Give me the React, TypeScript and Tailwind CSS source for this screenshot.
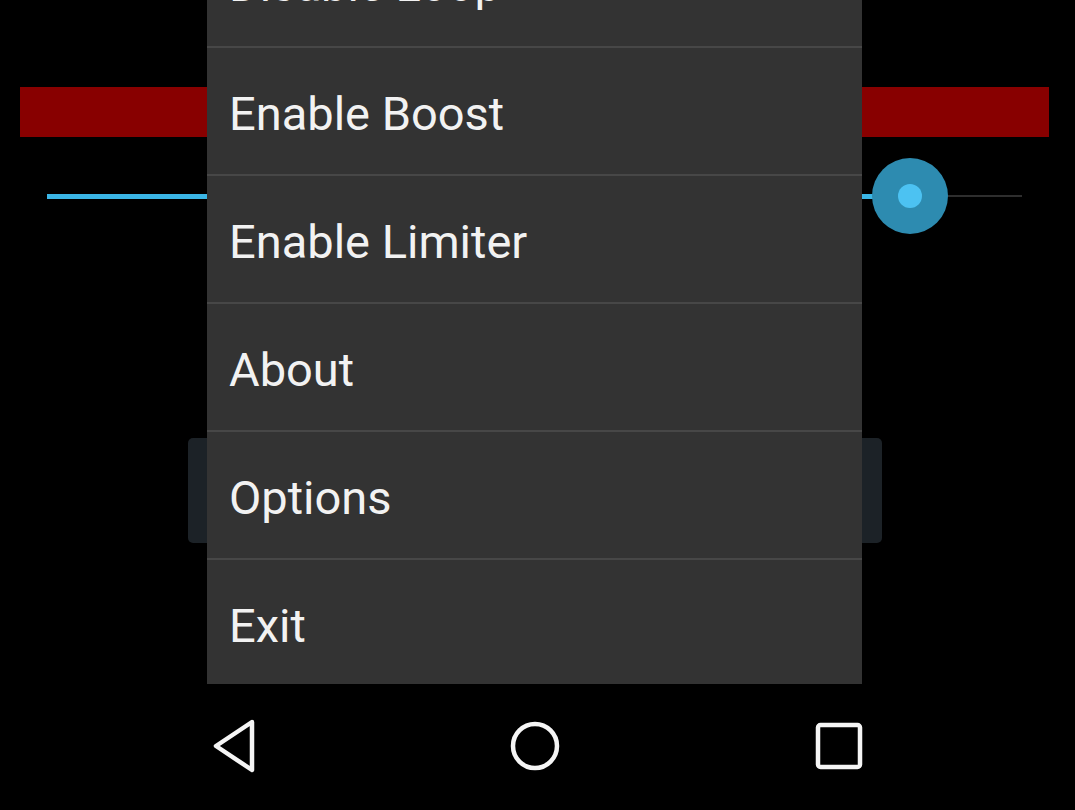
const items = ['Disable Loop', 'Enable Boost', 'Enable Limiter', 'About', 'Options', 'Exit'];

function BackIcon() {
  return (
    <svg width="48" height="56" viewBox="0 0 48 56" fill="none">
      <path d="M42 4 L6 28 L42 52 Z" stroke="#f5f5f5" strokeWidth="4.5" strokeLinejoin="round" />
    </svg>
  );
}

function HomeIcon() {
  return (
    <svg width="56" height="56" viewBox="0 0 56 56" fill="none">
      <circle cx="28" cy="28" r="22" stroke="#f5f5f5" strokeWidth="4.5" />
    </svg>
  );
}

function RecentsIcon() {
  return (
    <svg width="52" height="52" viewBox="0 0 52 52" fill="none">
      <rect x="5" y="5" width="42" height="42" rx="2.5" stroke="#f5f5f5" strokeWidth="4.5" />
    </svg>
  );
}

export default function App() {
  return (
    <div className="w-[1075px] h-[810px] bg-black overflow-hidden flex flex-col" style={{ fontFamily: 'Roboto, "Noto Sans", sans-serif' }}>
      {/* Activity content, with the overflow menu over it */}
      <div className="relative h-[684px] flex flex-col">
        <div className="mt-[87px] ml-[20px] w-[1029px] h-[50px] bg-[#880000]" />

        {/* Seek bar */}
        <div className="relative mt-[21px] ml-[47px] w-[975px] h-[76px]">
          <div className="absolute left-0 right-0 top-[37px] h-[2px] bg-[#2e2e2e]" />
          <div className="absolute left-0 top-[36px] w-[862px] h-[5px] bg-[#3bb6e6]" />
          <div className="absolute left-[825px] top-0 w-[76px] h-[76px] rounded-full bg-[#2d8bb0] flex items-center justify-center">
            <div className="w-[24px] h-[24px] rounded-full bg-[#4cc2f2]" />
          </div>
        </div>

        <div className="mt-[204px] ml-[188px] w-[694px] h-[105px] rounded-[5px] bg-[#1c2227]" />

        {/* Overflow menu */}
        <div className="absolute left-[207px] top-0 w-[655px] h-[684px] bg-[#333333] overflow-hidden">
          <div className="-mt-[82px] flex flex-col">
            {items.map((label, i) => (
              <div
                key={label}
                className={`h-[128px] flex items-center pl-[22px] pt-[7px] text-[47px] text-[#f2f2f2] ${i > 0 ? 'border-t-2 border-[#474747]' : ''}`}
              >
                {label}
              </div>
            ))}
          </div>
        </div>
      </div>

      {/* Navigation bar */}
      <div className="h-[126px] flex items-center pb-[2px]">
        <div className="ml-[172px] w-[120px] flex justify-center pl-[4px]">
          <BackIcon />
        </div>
        <div className="ml-[183px] w-[120px] flex justify-center">
          <HomeIcon />
        </div>
        <div className="ml-[184px] w-[120px] flex justify-center">
          <RecentsIcon />
        </div>
      </div>
    </div>
  );
}
